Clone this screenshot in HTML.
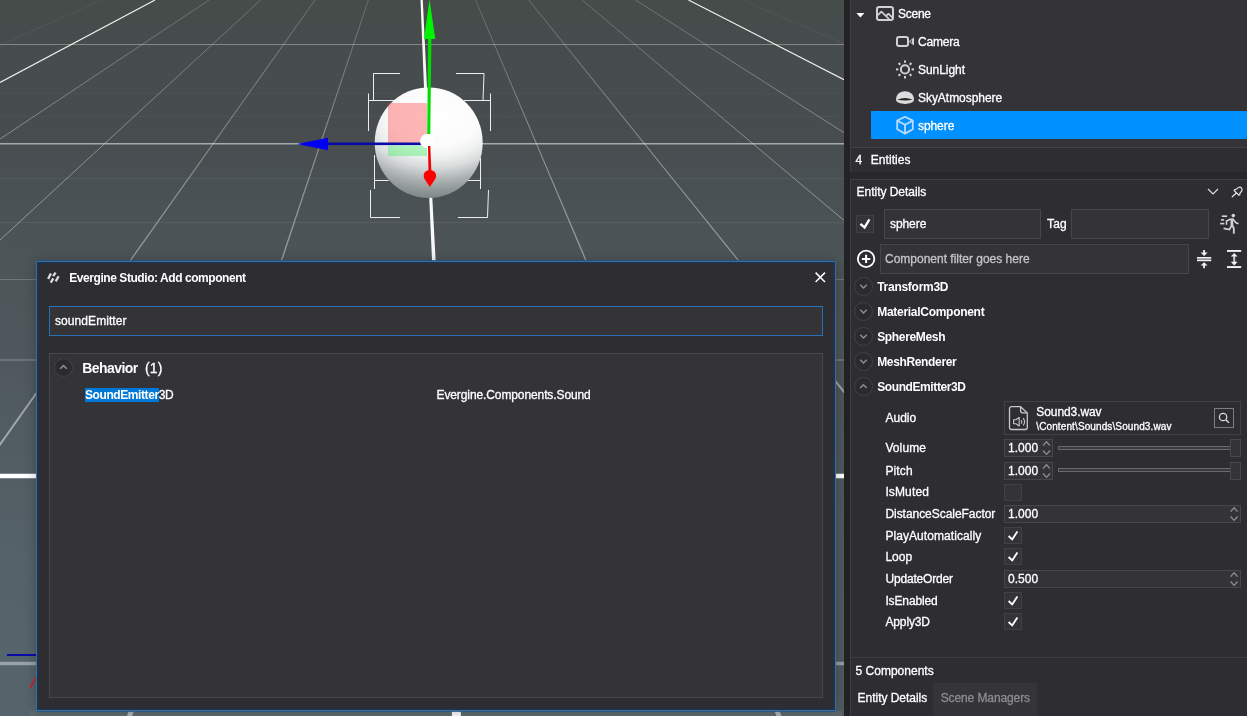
<!DOCTYPE html>
<html lang="en">
<head>
<meta charset="utf-8">
<title>Evergine Studio</title>
<style>
html,body{margin:0;padding:0;}
body{width:1247px;height:716px;overflow:hidden;position:relative;background:#2e2d32;font-family:'Liberation Sans',sans-serif;}
.abs{position:absolute;box-sizing:border-box;}
.t{position:absolute;white-space:pre;font-family:'Liberation Sans',sans-serif;color:#fff;-webkit-text-stroke:0.3px currentColor;}
#vp{left:0;top:0;width:844px;height:716px;background:linear-gradient(180deg,#464c4a 0px,#474d4f 130px,#4c5457 245px,#556269 565px,#56656c 716px);}
#div{left:844px;top:0;width:6px;height:716px;background:#232326;}
#tree{left:850px;top:0;width:397px;height:172px;background:#343338;border-left:1px solid #3e3e42;}
#gap{left:850px;top:172px;width:397px;height:7px;background:#28272b;}
#det{left:850px;top:179px;width:397px;height:537px;background:#2e2d32;border-left:1px solid #414145;border-top:1px solid #414145;}
.inp{background:#343338;border:1px solid #47474b;}
.cb{background:#343338;border:1px solid #414145;}
.circ{width:19px;height:19px;border-radius:50%;border:1px solid #424246;background:#2b2a2f;}
#dlg{left:36px;top:261px;width:800px;height:450px;background:#2e2d32;border:1px solid #3b6c9c;box-shadow:inset 0 0 0 1px #12365c,0 -1px 0 0 rgba(36,82,122,.85),0 1px 0 0 rgba(39,87,127,.85),0 0 12px rgba(0,0,0,.25);}
</style>
</head>
<body>
<!-- ===== 3D viewport ===== -->
<div id="vp" class="abs">
<svg width="844" height="716" viewBox="0 0 844 716" style="position:absolute;left:0;top:0;display:block">
<defs>
<radialGradient id="sph" cx="0.55" cy="0.28" r="0.8" fx="0.57" fy="0.26" gradientTransform="translate(0.55 0.28) scale(1.5 1) translate(-0.55 -0.28)">
<stop offset="0" stop-color="#ffffff"/>
<stop offset="0.34" stop-color="#fbfbfb"/>
<stop offset="0.46" stop-color="#eeefef"/>
<stop offset="0.56" stop-color="#dadddd"/>
<stop offset="0.68" stop-color="#b4b9b9"/>
<stop offset="0.8" stop-color="#949b9b"/>
<stop offset="0.9" stop-color="#7f8787"/>
<stop offset="1" stop-color="#727a7a"/>
</radialGradient>
<linearGradient id="fade" gradientUnits="userSpaceOnUse" x1="0" y1="0" x2="0" y2="716">
<stop offset="0" stop-color="#fff" stop-opacity="0.2"/>
<stop offset="0.2" stop-color="#fff" stop-opacity="0.36"/>
<stop offset="0.5" stop-color="#fff" stop-opacity="0.45"/>
<stop offset="1" stop-color="#fff" stop-opacity="0.5"/>
</linearGradient>
</defs>
<!-- thin strips next to the dialog -->
<rect x="836" y="262" width="8" height="454" fill="#495153" fill-opacity="0.5"/>
<rect x="30" y="711" width="812" height="5" fill="#646e6f" fill-opacity="0.6"/>
<!-- horizontal grid lines -->
<g stroke="#fff" fill="none">
<line x1="0" y1="58.6" x2="844" y2="58.6" stroke-opacity="0.012"/>
<line x1="0" y1="74.6" x2="844" y2="74.6" stroke-opacity="0.015"/>
<line x1="0" y1="93.5" x2="844" y2="93.5" stroke-opacity="0.025"/>
<line x1="0" y1="116.5" x2="844" y2="116.5" stroke-opacity="0.035"/>
<line x1="0" y1="44.5" x2="844" y2="44.5" stroke-opacity="0.32"/>
<line x1="0" y1="143.8" x2="844" y2="143.8" stroke-opacity="0.52" stroke-width="1.6"/>
<line x1="0" y1="178.5" x2="844" y2="178.5" stroke-opacity="0.06"/>
<line x1="0" y1="222.5" x2="844" y2="222.5" stroke-opacity="0.07"/>
<line x1="0" y1="279.5" x2="844" y2="279.5" stroke-opacity="0.2"/>
<line x1="0" y1="360" x2="844" y2="360" stroke-opacity="0.22" stroke-width="1.5"/>
<line x1="0" y1="476" x2="844" y2="476" stroke-opacity="1" stroke-width="4.4"/>
<line x1="0" y1="663.5" x2="844" y2="663.5" stroke-opacity="0.4" stroke-width="3.4"/>
</g>
<!-- perspective grid lines -->
<g stroke="#fff" fill="none" stroke-linecap="butt">
<line x1="48.9" y1="0" x2="0" y2="18.5" stroke-opacity="0.025"/>
<line x1="102.2" y1="0" x2="0" y2="45" stroke-opacity="0.06"/>
<line x1="155" y1="0" x2="0" y2="82.5" stroke-opacity="0.92" stroke-width="1.15"/>
<line x1="742" y1="0" x2="844" y2="43.6" stroke-opacity="0.05"/>
<line x1="688.5" y1="0" x2="844" y2="79.7" stroke-opacity="0.92" stroke-width="1.15"/>
</g>
<g stroke="url(#fade)" fill="none">
<line x1="209" y1="0" x2="0" y2="139"/>
<line x1="260.6" y1="0" x2="0" y2="240"/>
<line x1="635.5" y1="0" x2="844" y2="132.7"/>
<line x1="582.1" y1="0" x2="844" y2="220.4"/>
</g>
<!-- lines that widen towards the camera -->
<g fill="url(#fade)">
<polygon points="314.5,0.0 315.5,0.0 131.5,260.0 0.2,446.0 -2.4,446.0 129.9,260.0"/>
<polygon points="367.9,0.0 368.8,0.0 282.4,260.0 132.2,716.0 127.0,716.0 280.9,260.0"/>
<polygon points="475.1,0.0 475.9,0.0 586.5,260.0 781.5,716.0 776.5,716.0 585.0,260.0"/>
<polygon points="528.3,0.0 529.3,0.0 738.8,260.0 847.1,394.0 844.5,394.0 737.2,260.0"/>
</g>
<!-- world axis (white) -->
<polygon points="420.5,0 422.8,0 427,88 431.8,188 435.6,260 461,716 452,716 432,260 428.8,188 424,88" fill="#ffffff" fill-opacity="0.96"/>
<!-- sphere -->
<ellipse cx="428.7" cy="142.7" rx="54" ry="55.3" fill="url(#sph)"/>
<!-- selection bounding box corners -->
<g stroke="#fff" stroke-width="1" fill="none" stroke-opacity="0.9">
<polyline points="400,73.5 373.5,73.5 373.5,100.5"/>
<polyline points="396,100.5 368.5,100.5"/>
<polyline points="368.5,93.5 368.5,131"/>
<polyline points="456,73.5 484,73.5 483,100.5"/>
<polyline points="464,100.5 491,100.5"/>
<polyline points="490.5,93.5 490.5,131"/>
<polyline points="374.5,155 374.5,189"/>
<polyline points="374.5,180.5 388.7,180.5"/>
<polyline points="370.5,190 370.5,217.5 400,217.5"/>
<polyline points="480.5,158 480.5,189"/>
<polyline points="468,180.5 480.5,180.5"/>
<polyline points="488.5,190 487.5,217.5 458,217.5"/>
</g>
<!-- translate gizmo -->
<rect x="388" y="103" width="39" height="40" fill="#ff2a2a" fill-opacity="0.34"/>
<rect x="388" y="145.5" width="39" height="10.5" fill="#35f05a" fill-opacity="0.38"/>
<rect x="320" y="142.5" width="107" height="2.6" fill="#0a0aa6"/>
<polygon points="297,144 328,137.8 328,150.2" fill="#0000f2"/>
<polygon points="428.1,38 431.4,38 430.3,134 427.2,134" fill="#00e000"/>
<polygon points="429.5,-0.5 435.3,38.9 424,38.9" fill="#00f400"/>
<circle cx="427" cy="141" r="7" fill="#ffffff"/>
<polygon points="428,146 430.3,146 431.4,172 428.5,172" fill="#f00000"/>
<path d="M423.7,176 C423.7,172 426.5,170.3 429.9,170.3 C433.3,170.3 436.1,172 436.1,176 C436.1,179.5 431.5,183.5 429.9,187.3 C428.3,183.5 423.7,179.5 423.7,176 Z" fill="#ff0000"/>
<!-- other gizmo fragments -->
<rect x="7" y="654" width="30" height="2" fill="#0a0aa8"/>
<line x1="30.2" y1="687.8" x2="35.6" y2="678" stroke="#e01428" stroke-width="1.4"/>
</svg>

</div>
<div id="div" class="abs"></div>

<!-- ===== scene tree ===== -->
<div id="tree" class="abs"></div>
<div class="abs" style="left:871px;top:111px;width:376px;height:28px;background:#0090ff;"></div>
<div class="abs" style="left:851px;top:147px;width:396px;height:1px;background:#434347;"></div>
<div class="abs" style="left:851px;top:148px;width:396px;height:24px;background:#2e2d32;"></div>
<div id="gap" class="abs"></div>

<!-- ===== entity details ===== -->
<div id="det" class="abs"></div>
<div class="abs cb" style="left:856px;top:215px;width:18px;height:18px;"></div>
<div class="abs inp" style="left:884px;top:209px;width:157px;height:30px;"></div>
<div class="abs inp" style="left:1071px;top:209px;width:138px;height:30px;"></div>
<div class="abs inp" style="left:880px;top:244px;width:309px;height:30px;"></div>
<div class="abs circ" style="left:854px;top:277px;"></div>
<div class="abs circ" style="left:854px;top:302px;"></div>
<div class="abs circ" style="left:854px;top:327px;"></div>
<div class="abs circ" style="left:854px;top:352px;"></div>
<div class="abs circ" style="left:854px;top:377px;"></div>
<!-- property editors -->
<div class="abs inp" style="left:1004px;top:401px;width:237px;height:34px;background:#2e2d32;border-color:#414145;"></div>
<div class="abs" style="left:1214px;top:408px;width:20px;height:20px;border:1px solid #7d7d81;background:#2e2d32;"></div>
<div class="abs inp" style="left:1004px;top:439px;width:49px;height:18px;"></div>
<div class="abs inp" style="left:1004px;top:462px;width:49px;height:18px;"></div>
<div class="abs" style="left:1058px;top:446px;width:173px;height:4px;border:1px solid #6a6a6e;background:#3a3a3e;"></div>
<div class="abs" style="left:1058px;top:468px;width:173px;height:4px;border:1px solid #6a6a6e;background:#3a3a3e;"></div>
<div class="abs" style="left:1230px;top:439px;width:11px;height:18px;border:1px solid #48484c;background:#343338;"></div>
<div class="abs" style="left:1230px;top:462px;width:11px;height:18px;border:1px solid #48484c;background:#343338;"></div>
<div class="abs cb" style="left:1004px;top:484px;width:18px;height:17px;"></div>
<div class="abs inp" style="left:1004px;top:505px;width:237px;height:18px;"></div>
<div class="abs cb" style="left:1004px;top:527px;width:18px;height:17px;"></div>
<div class="abs cb" style="left:1004px;top:548px;width:18px;height:17px;"></div>
<div class="abs inp" style="left:1004px;top:570px;width:237px;height:18px;"></div>
<div class="abs cb" style="left:1004px;top:592px;width:18px;height:17px;"></div>
<div class="abs cb" style="left:1004px;top:613px;width:18px;height:17px;"></div>
<div class="abs" style="left:851px;top:657px;width:396px;height:1px;background:#3d3d41;"></div>
<div class="abs" style="left:933px;top:683px;width:104px;height:33px;background:#353539;"></div>

<!-- ===== add component dialog ===== -->
<div id="dlg" class="abs"></div>
<div class="abs" style="left:49px;top:306px;width:774px;height:30px;background:#343338;border:1px solid #2a6fb6;"></div>
<div class="abs" style="left:49px;top:353px;width:774px;height:345px;background:#343338;border:1px solid #47474b;"></div>
<div class="abs circ" style="left:54px;top:358px;"></div>
<div class="abs" style="left:85px;top:388px;width:74px;height:14px;background:#0078d7;"></div>

<!-- ===== icons ===== -->
<svg width="1247" height="716" viewBox="0 0 1247 716" style="position:absolute;left:0;top:0;display:block;pointer-events:none">
<!-- tree expander -->
<polygon points="856.4,13 864.4,13 860.4,17.5" fill="#ffffff"/>
<!-- scene icon -->
<g stroke="#d2d2d4" fill="none" stroke-width="2" stroke-linejoin="round" stroke-linecap="round">
<rect x="877" y="7" width="16" height="13" rx="2.2"/>
<polyline points="878.4,14.6 881.4,11.6 889,19" stroke-width="1.7"/>
<polyline points="886.6,15.2 888.6,13.8 892,17.2" stroke-width="1.7"/>
</g>
<!-- camera icon -->
<g stroke="#d2d2d4" fill="none" stroke-width="2" stroke-linejoin="round">
<rect x="897" y="37" width="11" height="9" rx="2"/>
<polygon points="909,41.45 914,37.3 914,45.6" fill="#d2d2d4" stroke="none"/><polygon points="910.3,41.45 912,40 912,42.9" fill="#343338" stroke="none"/>
</g>
<!-- sun icon -->
<g stroke="#d2d2d4" fill="none" stroke-width="2">
<circle cx="905" cy="69.4" r="4.1"/>
<g stroke-width="2">
<line x1="905" y1="60.4" x2="905" y2="62.8"/>
<line x1="905" y1="76" x2="905" y2="78.4"/>
<line x1="896" y1="69.4" x2="898.4" y2="69.4"/>
<line x1="911.6" y1="69.4" x2="914" y2="69.4"/>
<line x1="898.6" y1="63" x2="900.3" y2="64.7"/>
<line x1="909.7" y1="74.1" x2="911.4" y2="75.8"/>
<line x1="898.6" y1="75.8" x2="900.3" y2="74.1"/>
<line x1="909.7" y1="64.7" x2="911.4" y2="63"/>
</g>
</g>
<!-- sky dome icon -->
<path d="M896,99.6 C896,88.4 914,88.4 914,99.6 C914,105.4 896,105.4 896,99.6 Z" fill="#dcdcde"/>
<path d="M897.2,99.8 Q905,96.4 912.8,99.8 Q905,101 897.2,99.8 Z" fill="#2a2626"/>
<!-- cube icon (selected row) -->
<g stroke="#b8dcff" fill="none" stroke-width="1.8" stroke-linejoin="round">
<polygon points="905,116.8 912.8,120.6 912.8,129.2 905,133.6 897.2,129.2 897.2,120.6"/>
<polyline points="897.2,120.6 905,124.8 912.8,120.6"/>
<line x1="905" y1="124.8" x2="905" y2="133.6"/>
</g>
<!-- panel header chevron + pin -->
<polyline points="1208,189 1213,193.9 1218,189" stroke="#dcdcde" stroke-width="1.3" fill="none"/>
<g stroke="#e2e2e4" stroke-width="1.2" fill="none" stroke-linejoin="round" stroke-linecap="round">
<path d="M1234.1,190.5 Q1234.5,189 1236,189.4 L1238.3,187.6 Q1240.2,186.4 1241.5,188 Q1242.7,189.6 1241.4,191.5 L1239.8,193.4 Q1240.3,195 1238.9,195.2 Z"/>
<line x1="1236.3" y1="193" x2="1232.2" y2="196.8"/>
</g>
<!-- entity enabled check -->
<polyline points="860.4,223.8 864.6,227.4 869.4,219.4" stroke="#ffffff" stroke-width="2.3" fill="none"/>
<!-- static (runner) icon -->
<g stroke="#d4d4d6" fill="none" stroke-width="1.6" stroke-linecap="butt" stroke-linejoin="miter">
<line x1="1221.8" y1="216.2" x2="1227.1" y2="216.2"/>
<line x1="1221" y1="219.9" x2="1224.1" y2="219.9"/>
<line x1="1220.1" y1="223.6" x2="1224.3" y2="223.6"/>
<line x1="1231.8" y1="218.4" x2="1232" y2="226.6" stroke-width="2.7"/>
<polyline points="1230.8,219 1226.5,221 1226.5,224.8" stroke-width="1.5"/>
<polyline points="1232.8,219 1236,222.8 1238.5,223.7" stroke-width="1.5"/>
<polyline points="1231.4,226 1229.4,229.6 1223.6,228.4" stroke-width="1.7"/>
<polyline points="1232.6,226 1233.8,228.2 1233.8,233.8" stroke-width="1.8"/>
</g>
<circle cx="1233.3" cy="215.6" r="1.8" fill="#d4d4d6"/>
<!-- add component (+) -->
<circle cx="866.1" cy="258.9" r="8.2" stroke="#ffffff" stroke-width="1.8" fill="none"/>
<path d="M861.9,258.9 H870.3 M866.1,254.7 V263.1" stroke="#ffffff" stroke-width="2" fill="none"/>
<!-- collapse all -->
<g fill="#f2f2f2">
<rect x="1197" y="257" width="14.2" height="1.7"/>
<rect x="1197" y="259.5" width="14.2" height="1.7"/>
<rect x="1197" y="258.7" width="14.2" height="0.8" fill="#9a9a9c"/>
<rect x="1203.2" y="250" width="1.8" height="3.4"/>
<polygon points="1200.6,252.6 1207.6,252.6 1204.1,256"/>
<rect x="1203.2" y="264.8" width="1.8" height="3.4"/>
<polygon points="1200.6,265.6 1207.6,265.6 1204.1,262.2"/>
</g>
<!-- expand all -->
<g fill="#f2f2f2">
<rect x="1227" y="250" width="14.2" height="1.9"/>
<rect x="1227" y="266.1" width="14.2" height="1.9"/>
<rect x="1233.2" y="255.5" width="2" height="7.4" fill="#c8c8ca"/>
<polygon points="1230.8,256.6 1237.6,256.6 1234.2,253"/>
<polygon points="1230.8,261.8 1237.6,261.8 1234.2,265.4"/>
</g>
<!-- component expanders -->
<g stroke="#8c8c90" stroke-width="1.6" fill="none">
<polyline points="860.2,284.8 863.5,288 866.8,284.8"/>
<polyline points="860.2,309.8 863.5,313 866.8,309.8"/>
<polyline points="860.2,334.8 863.5,338 866.8,334.8"/>
<polyline points="860.2,359.8 863.5,363 866.8,359.8"/>
<polyline points="860.2,388 863.5,384.8 866.8,388"/>
<polyline points="60.2,368.8 63.5,365.6 66.8,368.8"/>
</g>
<!-- audio file icon -->
<g stroke="#c8c8ca" stroke-width="1.3" fill="none" stroke-linejoin="round">
<path d="M1011.6,406.7 H1020.6 L1027.3,413 V427.4 Q1027.3,429.5 1025.2,429.5 H1011.6 Q1009.5,429.5 1009.5,427.4 V408.8 Q1009.5,406.7 1011.6,406.7 Z"/>
<path d="M1020.6,406.9 V410.8 Q1020.6,412.8 1022.6,412.8 H1027"/>
<path d="M1013.6,419.8 H1016 L1019.2,417.4 V426 L1016,423.8 H1013.6 Z" stroke-width="1.1"/>
<path d="M1021.2,420 Q1022.6,421.8 1021.2,423.6" stroke-width="1.1"/>
<path d="M1023.2,418.2 Q1026,421.8 1023.2,425.4" stroke-width="1.1"/>
</g>
<!-- search -->
<circle cx="1223.1" cy="417" r="3.7" stroke="#e0e0e2" stroke-width="1.2" fill="none"/>
<line x1="1225.8" y1="419.8" x2="1229" y2="422.8" stroke="#e0e0e2" stroke-width="1.3"/>
<!-- spinners -->
<g stroke="#8e8e92" stroke-width="1.3" fill="none">
<polyline points="1043,445.6 1046.5,441.7 1050,445.6"/>
<polyline points="1043,450.5 1046.5,454.4 1050,450.5"/>
<polyline points="1043,468.6 1046.5,464.7 1050,468.6"/>
<polyline points="1043,473.5 1046.5,477.4 1050,473.5"/>
<polyline points="1230.6,511.6 1234.1,507.7 1237.6,511.6"/>
<polyline points="1230.6,516.5 1234.1,520.4 1237.6,516.5"/>
<polyline points="1230.6,576.6 1234.1,572.7 1237.6,576.6"/>
<polyline points="1230.6,581.5 1234.1,585.4 1237.6,581.5"/>
</g>
<!-- property checks -->
<g stroke="#ffffff" stroke-width="1.9" fill="none">
<polyline points="1008.6,536 1012.2,539.4 1017.4,531.4"/>
<polyline points="1008.6,557 1012.2,560.4 1017.4,552.4"/>
<polyline points="1008.6,601 1012.2,604.4 1017.4,596.4"/>
<polyline points="1008.6,622 1012.2,625.4 1017.4,617.4"/>
</g>
<!-- dialog title icon -->
<g stroke="#dcdcde" stroke-width="2.3" fill="none">
<line x1="48.1" y1="278.9" x2="50.9" y2="273.5"/>
<line x1="53.1" y1="276.2" x2="55.6" y2="272.6"/>
<line x1="50.8" y1="282.6" x2="53.3" y2="278.3"/>
<line x1="55.7" y1="281.4" x2="58.6" y2="276.2"/>
</g>
<!-- dialog close -->
<path d="M815.6,272.6 L825,282 M825,272.6 L815.6,282" stroke="#ffffff" stroke-width="1.5" fill="none"/>
</svg>


<!-- ===== text ===== -->
<div id="txt" class="abs" style="left:0;top:0;width:1247px;height:716px;will-change:transform;">
<div class="t" style="left:898.0px;top:5.5px;height:16px;line-height:16px;font-size:12px;letter-spacing:-0.253px;color:#ffffff;">Scene</div>
<div class="t" style="left:918.0px;top:33.5px;height:16px;line-height:16px;font-size:12px;letter-spacing:-0.182px;color:#ffffff;">Camera</div>
<div class="t" style="left:918.0px;top:61.5px;height:16px;line-height:16px;font-size:12px;letter-spacing:-0.043px;color:#ffffff;">SunLight</div>
<div class="t" style="left:918.0px;top:89.5px;height:16px;line-height:16px;font-size:12px;letter-spacing:-0.043px;color:#ffffff;">SkyAtmosphere</div>
<div class="t" style="left:918.0px;top:117.5px;height:16px;line-height:16px;font-size:12px;letter-spacing:-0.078px;color:#ffffff;">sphere</div>
<div class="t" style="left:855.5px;top:151.6px;height:16px;line-height:16px;font-size:12px;letter-spacing:0.062px;color:#ffffff;">4</div>
<div class="t" style="left:870.8px;top:151.6px;height:16px;line-height:16px;font-size:12px;letter-spacing:0.043px;color:#ffffff;">Entities</div>
<div class="t" style="left:856.6px;top:183.5px;height:16px;line-height:16px;font-size:12px;letter-spacing:-0.031px;color:#ffffff;">Entity Details</div>
<div class="t" style="left:890.0px;top:215.7px;height:16px;line-height:16px;font-size:12px;letter-spacing:-0.078px;color:#ffffff;">sphere</div>
<div class="t" style="left:1047.0px;top:215.7px;height:16px;line-height:16px;font-size:12px;letter-spacing:0.135px;color:#ffffff;">Tag</div>
<div class="t" style="left:885.0px;top:250.7px;height:16px;line-height:16px;font-size:12px;letter-spacing:-0.006px;color:#c4c4c6;">Component filter goes here</div>
<div class="t" style="left:877.2px;top:278.6px;height:16px;line-height:16px;font-size:12px;letter-spacing:-0.267px;color:#ffffff;font-weight:700;-webkit-text-stroke:0;">Transform3D</div>
<div class="t" style="left:877.2px;top:303.6px;height:16px;line-height:16px;font-size:12px;letter-spacing:-0.284px;color:#ffffff;font-weight:700;-webkit-text-stroke:0;">MaterialComponent</div>
<div class="t" style="left:877.2px;top:328.6px;height:16px;line-height:16px;font-size:12px;letter-spacing:-0.338px;color:#ffffff;font-weight:700;-webkit-text-stroke:0;">SphereMesh</div>
<div class="t" style="left:877.2px;top:353.6px;height:16px;line-height:16px;font-size:12px;letter-spacing:-0.350px;color:#ffffff;font-weight:700;-webkit-text-stroke:0;">MeshRenderer</div>
<div class="t" style="left:877.2px;top:378.6px;height:16px;line-height:16px;font-size:12px;letter-spacing:-0.403px;color:#ffffff;font-weight:700;-webkit-text-stroke:0;">SoundEmitter3D</div>
<div class="t" style="left:885.4px;top:410.0px;height:16px;line-height:16px;font-size:12px;letter-spacing:0.044px;color:#ffffff;">Audio</div>
<div class="t" style="left:885.4px;top:439.5px;height:16px;line-height:16px;font-size:12px;letter-spacing:0.102px;color:#ffffff;">Volume</div>
<div class="t" style="left:885.4px;top:462.5px;height:16px;line-height:16px;font-size:12px;letter-spacing:0.125px;color:#ffffff;">Pitch</div>
<div class="t" style="left:885.4px;top:483.5px;height:16px;line-height:16px;font-size:12px;letter-spacing:0.132px;color:#ffffff;">IsMuted</div>
<div class="t" style="left:885.4px;top:505.5px;height:16px;line-height:16px;font-size:12px;letter-spacing:-0.044px;color:#ffffff;">DistanceScaleFactor</div>
<div class="t" style="left:885.4px;top:527.5px;height:16px;line-height:16px;font-size:12px;letter-spacing:0.067px;color:#ffffff;">PlayAutomatically</div>
<div class="t" style="left:885.4px;top:548.5px;height:16px;line-height:16px;font-size:12px;letter-spacing:0.047px;color:#ffffff;">Loop</div>
<div class="t" style="left:885.4px;top:570.5px;height:16px;line-height:16px;font-size:12px;letter-spacing:-0.169px;color:#ffffff;">UpdateOrder</div>
<div class="t" style="left:885.4px;top:592.5px;height:16px;line-height:16px;font-size:12px;letter-spacing:-0.128px;color:#ffffff;">IsEnabled</div>
<div class="t" style="left:885.4px;top:613.5px;height:16px;line-height:16px;font-size:12px;letter-spacing:-0.118px;color:#ffffff;">Apply3D</div>
<div class="t" style="left:1008.0px;top:439.5px;height:16px;line-height:16px;font-size:12px;letter-spacing:0.022px;color:#ffffff;">1.000</div>
<div class="t" style="left:1008.0px;top:462.5px;height:16px;line-height:16px;font-size:12px;letter-spacing:0.022px;color:#ffffff;">1.000</div>
<div class="t" style="left:1008.0px;top:505.5px;height:16px;line-height:16px;font-size:12px;letter-spacing:0.022px;color:#ffffff;">1.000</div>
<div class="t" style="left:1008.0px;top:570.5px;height:16px;line-height:16px;font-size:12px;letter-spacing:0.022px;color:#ffffff;">0.500</div>
<div class="t" style="left:1036.3px;top:403.5px;height:16px;line-height:16px;font-size:12px;letter-spacing:-0.089px;color:#ffffff;">Sound3.wav</div>
<div class="t" style="left:1036.3px;top:420.8px;height:12px;line-height:12px;font-size:10px;letter-spacing:0.111px;color:#ffffff;">\Content\Sounds\Sound3.wav</div>
<div class="t" style="left:855.5px;top:662.5px;height:16px;line-height:16px;font-size:12px;letter-spacing:0.014px;color:#ffffff;">5 Components</div>
<div class="t" style="left:857.6px;top:689.5px;height:16px;line-height:16px;font-size:12px;letter-spacing:-0.031px;color:#ffffff;">Entity Details</div>
<div class="t" style="left:940.7px;top:689.5px;height:16px;line-height:16px;font-size:12px;letter-spacing:-0.105px;color:#8c8c90;">Scene Managers</div>
<div class="t" style="left:69.3px;top:269.5px;height:16px;line-height:16px;font-size:12px;letter-spacing:-0.441px;color:#ffffff;font-weight:700;-webkit-text-stroke:0;">Evergine Studio: Add component</div>
<div class="t" style="left:55.0px;top:312.5px;height:16px;line-height:16px;font-size:12px;letter-spacing:0.074px;color:#ffffff;">soundEmitter</div>
<div class="t" style="left:82.2px;top:358.8px;height:18px;line-height:18px;font-size:14px;letter-spacing:-0.545px;color:#ffffff;font-weight:700;-webkit-text-stroke:0;">Behavior</div>
<div class="t" style="left:145.0px;top:358.8px;height:18px;line-height:18px;font-size:14px;letter-spacing:0.141px;color:#ffffff;">(1)</div>
<div class="t" style="left:85.0px;top:386.6px;height:16px;line-height:16px;font-size:12px;letter-spacing:-0.415px;color:#ffffff;font-weight:700;-webkit-text-stroke:0;">SoundEmitter</div>
<div class="t" style="left:158.7px;top:386.6px;height:16px;line-height:16px;font-size:12px;letter-spacing:-0.359px;color:#ffffff;">3D</div>
<div class="t" style="left:436.5px;top:386.6px;height:16px;line-height:16px;font-size:12px;letter-spacing:-0.104px;color:#ffffff;">Evergine.Components.Sound</div>
</div>
</body>
</html>
